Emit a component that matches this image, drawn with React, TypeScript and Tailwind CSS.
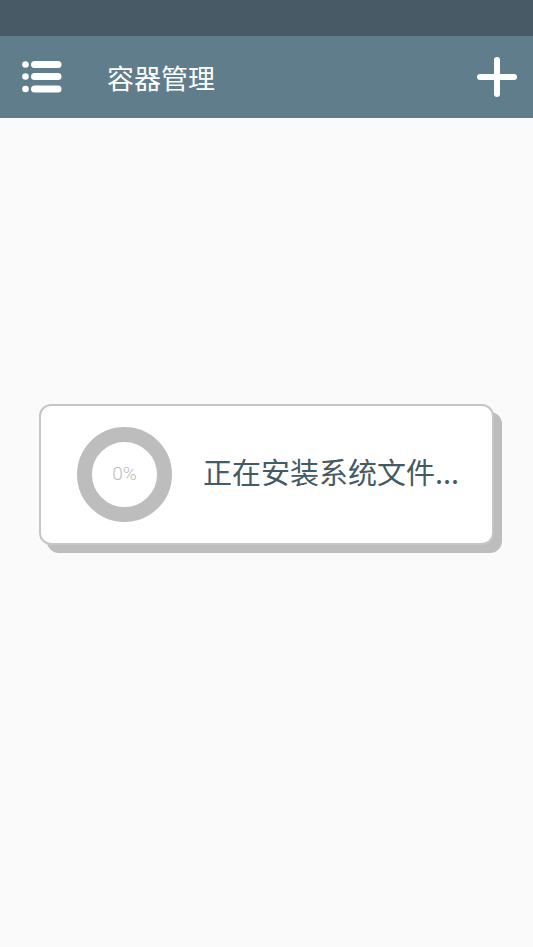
export default function App() {
  return (
    <div className="flex h-[947px] w-[533px] flex-col bg-[#fafafa]" style={{ fontFamily: '"Noto Sans CJK SC", "Noto Sans", sans-serif' }}>
      <div className="h-[36px] bg-[#475a66]" />
      <div className="flex h-[82px] items-center bg-[#607d8b] pl-[22px] pr-[16px]">
        <svg width="40" height="34" viewBox="0 0 40 34">
          <g fill="#fff">
            <circle cx="3.5" cy="4.5" r="3.3" />
            <circle cx="3.5" cy="16.5" r="3.3" />
            <circle cx="3.5" cy="29" r="3.3" />
          </g>
          <g stroke="#fff" strokeWidth="7" strokeLinecap="round">
            <line x1="12.5" y1="4.5" x2="36" y2="4.5" />
            <line x1="12.5" y1="16.5" x2="36" y2="16.5" />
            <line x1="12.5" y1="29" x2="36" y2="29" />
          </g>
        </svg>
        <div className="ml-[45px] text-[27px] leading-none text-white">容器管理</div>
        <svg className="ml-auto" width="40" height="40" viewBox="0 0 40 40">
          <g stroke="#fff" strokeWidth="6" strokeLinecap="round">
            <line x1="20" y1="3" x2="20" y2="37" />
            <line x1="3" y1="20" x2="37" y2="20" />
          </g>
        </svg>
      </div>
      <div className="flex flex-1 items-start justify-center pt-[286px]">
        <div className="flex h-[141px] w-[455px] items-center rounded-[12px] border-2 border-[#c6c6c6] bg-white pl-[36px] shadow-[8px_8px_0_0_#bdbdbd]">
          <div className="flex h-[95px] w-[95px] items-center justify-center rounded-full border-[15px] border-[#bdbdbd]">
            <span className="text-[19px] font-light text-[#bdbdbd]" style={{ fontFamily: 'Roboto, sans-serif' }}>0%</span>
          </div>
          <div className="mb-[6px] ml-[31px] text-[29px] leading-none text-[#455a64]">正在安装系统文件...</div>
        </div>
      </div>
    </div>
  );
}
